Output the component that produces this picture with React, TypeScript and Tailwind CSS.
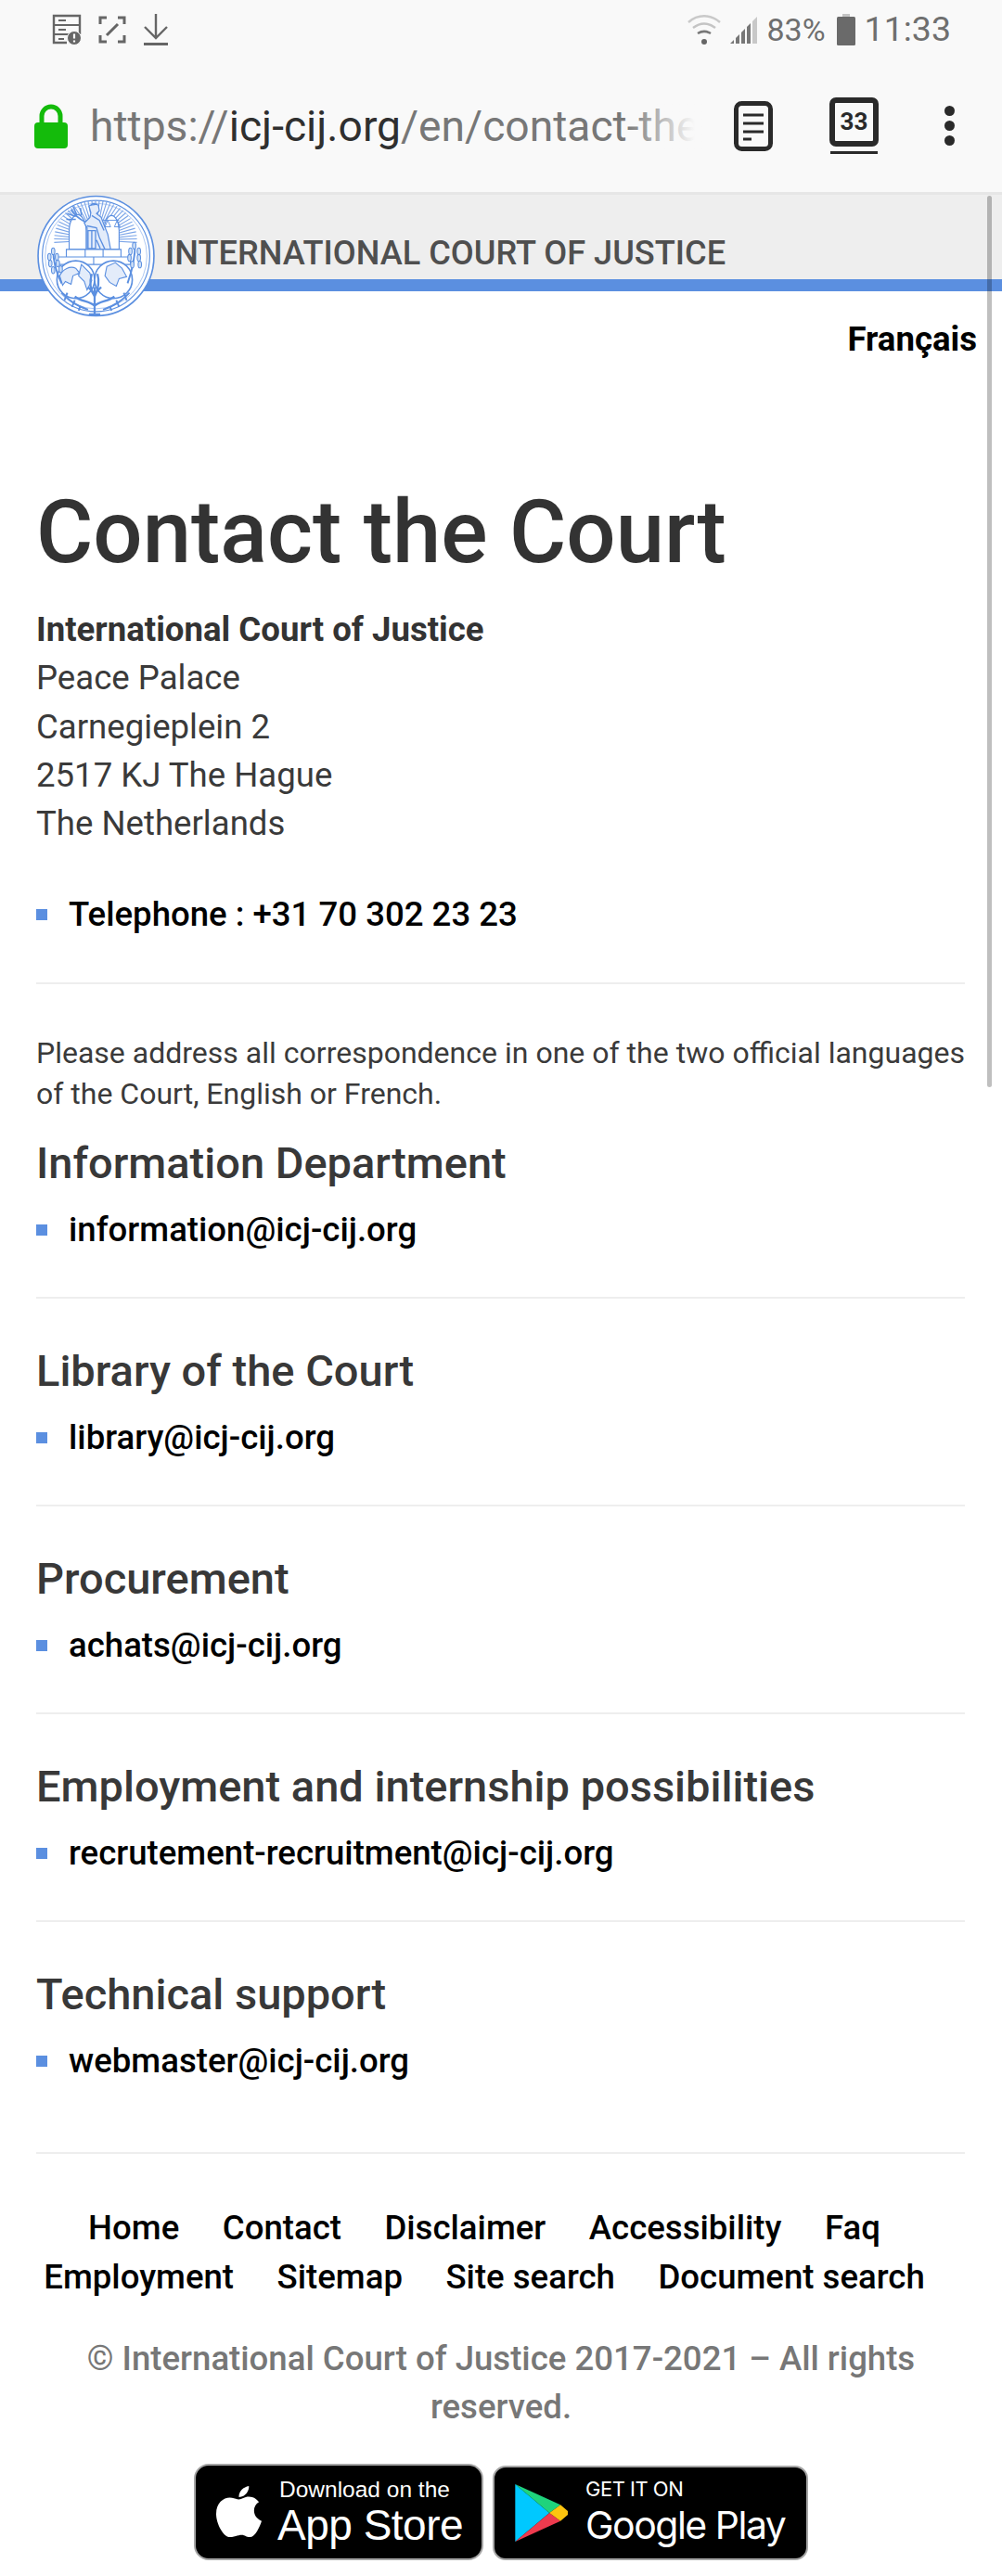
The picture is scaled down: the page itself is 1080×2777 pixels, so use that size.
import React from "react";

function Seal() {
  const rays = Array.from({ length: 37 }, (_, i) => {
    const a = Math.PI * 0.98 + (i * Math.PI * 1.04) / 36;
    return <line key={i} x1={62 + 20 * Math.cos(a)} y1={48 + 20 * Math.sin(a)} x2={62 + 44 * Math.cos(a)} y2={48 + 42 * Math.sin(a)} stroke="#7ba5e8" strokeWidth="1.1" />;
  });
  const leavesL = [[17, 60], [13, 66], [21, 66], [14, 73], [22, 73], [17, 80], [25, 79]];
  const leavesR = [[103, 54], [99, 60], [108, 60], [98, 67], [108, 67], [101, 74], [109, 74]];
  return (
    <svg viewBox="0 0 126 130" className="absolute left-[38px] top-0 w-[132px] h-[132px]">
      <ellipse cx="62.500" cy="65" rx="61.500" ry="63.500" fill="#fff" stroke="#5b8fe0" strokeWidth="1.6" />
      <ellipse cx="62.500" cy="65" rx="57" ry="59" fill="none" stroke="#5b8fe0" strokeWidth="1.1" />
      <ellipse cx="62.500" cy="65" rx="54" ry="56" fill="none" stroke="#9dbcef" strokeWidth="0.8" />
      {rays}
      {/* domes */}
      <path d="M34 58V38c0-10 5-17 9-17s9 7 9 17v20z" fill="#fff" stroke="#5b8fe0" strokeWidth="1.1" />
      <path d="M71 58V38c0-9 4-16 8-16s8 7 8 16v20z" fill="#fff" stroke="#5b8fe0" strokeWidth="1.1" />
      {/* Justice figure */}
      <path d="M55 12l5-3 5 2 1 6-3 3 5 4 3 8 4 10 3 16H53V35l-3-5 6-6 1-5z" fill="#e3ecfa" stroke="#5b8fe0" strokeWidth="1.2" />
      <path d="M57 11l7-1M58 22l8 5 5 11M53 33l10 2 3 10 6 13M54 38h8v19h-8zM58 38v19M63 48l4 9" fill="none" stroke="#5b8fe0" strokeWidth="1.3" />
      <path d="M36 16c3 5 8 9 15 13M38 12l4 9M32 20l9 3M31 26l10 0M46 14l1 8" fill="none" stroke="#5b8fe0" strokeWidth="1.5" />
      <path d="M70 27h17M75 27l-3 7h6zM85 27l-3 7h6z" fill="none" stroke="#5b8fe0" strokeWidth="0.9" />
      {/* plinth */}
      <path d="M31 58h58v8H31zM22 66h77v8H22zM51 58v8M70 58v8M60 66v8" fill="#fff" stroke="#5b8fe0" strokeWidth="1.1" />
      {/* globes */}
      <circle cx="41" cy="90" r="20" fill="#fff" stroke="#5b8fe0" strokeWidth="1.6" />
      <circle cx="81" cy="90" r="20" fill="#fff" stroke="#5b8fe0" strokeWidth="1.6" />
      <path d="M24 86c3-7 11-11 17-8l4 5-7 3-2 9-6-3-3 4zM47 74l9 9 2 8-5 10-3-9-6-6zM74 76l9-4 7 6 5 9-8 2-3 8-7-4-5-7z" fill="#e3ecfa" stroke="#5b8fe0" strokeWidth="1.1" />
      {/* tree */}
      <path d="M61 127V98M61 118c-6-6-14-4-21-10M61 118c6-6 14-4 21-10M61 108c-4-6-6-14-3-24M61 108c3-6 6-14 3-24M55 127h12M54 98l7 7 7-7" fill="none" stroke="#5b8fe0" strokeWidth="2.2" />
      {/* laurels */}
      <path d="M17 58c0 10 3 24 9 36M104 52c0 12-3 28-8 42M26 104c8 8 14 13 28 18M98 104c-8 8-14 13-28 18M32 104l-3 8M40 112l-3 7M92 104l3 8M84 112l3 7M46 118l-2 5M77 118l2 5" fill="none" stroke="#5b8fe0" strokeWidth="1.9" />
      {leavesL.concat(leavesR).map(([x, y], i) => (
        <ellipse key={i} cx={x} cy={y} rx="1.800" ry="3.600" fill="#cfe0f6" stroke="#5b8fe0" strokeWidth="1" />
      ))}
    </svg>
  );
}

function Mail({ text, last }: { text: string; last?: boolean }) {
  return (
    <div className={`flex items-center h-[52px] ${last ? "mb-[72px]" : "mb-[46px]"}`}>
      <span className="w-[12px] h-[12px] bg-[#5b8fe0] mr-[23px]" />
      <span className="text-[36.6px] font-medium text-black">{text}</span>
    </div>
  );
}

function Section({ title, mail, last }: { title: string; mail: string; last?: boolean }) {
  return (
    <div className={last ? "" : "border-b-[2px] border-[#eeeeee]"}>
      <h2 className="text-[47px] leading-[58px] font-medium text-[#383838] mb-[17px]">{title}</h2>
      <Mail text={mail} last={last} />
    </div>
  );
}

export default function App() {
  return (
    <div className="relative w-[1080px] h-[2777px] bg-white overflow-hidden font-['Roboto',sans-serif]">
      {/* Browser chrome */}
      <div className="h-[210px] bg-[#f9f9f9] border-b-[3px] border-[#e6e6e6] flex flex-col">
        <div className="h-[62px] flex items-center justify-between pl-[56px] pr-[55px] pt-[2px]">
          <div className="flex items-center gap-[18px] text-[#666]">
            <svg width="32" height="34" viewBox="0 0 32 34" fill="none" stroke="#666" strokeWidth="2.4">
              <path d="M16 31H2V2h28v20" />
              <path d="M2 12h28M2 22h16M7 7h8M7 17h8M7 27h6" strokeWidth="2" />
              <circle cx="24" cy="26" r="7.5" fill="#666" stroke="#f9f9f9" strokeWidth="1" />
              <path d="M24 21.5v5M24 28.5v2" stroke="#fff" strokeWidth="2.2" />
            </svg>
            <svg width="30" height="30" viewBox="0 0 30 30" fill="none" stroke="#666" strokeWidth="3">
              <path d="M2 9V2h7M21 2h7v7M28 21v7h-7M9 28H2v-7M9 21L21 9" />
            </svg>
            <svg width="28" height="36" viewBox="0 0 28 36" fill="none" stroke="#666" strokeWidth="2.4">
              <path d="M14 1v25M2 15l12 12 12-12" />
              <path d="M1 33.5h26" strokeWidth="3" />
            </svg>
          </div>
          <div className="flex items-center text-[#6f6f6f]">
            <svg width="38" height="34" viewBox="0 0 38 34" fill="none" className="mr-[8px]">
              <path d="M2 9c10-9 24-9 34 0" stroke="#c9c9c9" strokeWidth="2.4" />
              <path d="M7 15c8-6 16-6 24 0" stroke="#c4c4c4" strokeWidth="2.4" />
              <path d="M12 21c5-3 9-3 14 0" stroke="#777" strokeWidth="2.6" />
              <circle cx="19" cy="30" r="3" fill="#666" />
            </svg>
            <svg width="32" height="34" viewBox="0 0 32 34" className="mr-[8px]">
              <path d="M1 32l4-4v4z" fill="#777" />
              <path d="M7 26l4-4v10H7zM13 20l4-4v16h-4z" fill="#777" />
              <path d="M19 14l4-4v22h-4z" fill="#777" />
              <path d="M25 8l5-5v29h-5z" fill="#c8c8c8" />
            </svg>
            <span className="text-[34px] leading-none mr-[11px]">83%</span>
            <svg width="22" height="34" viewBox="0 0 22 34" className="mr-[9px]">
              <path d="M7 0h8v3H7z" fill="#c4c4c4" />
              <rect x="1" y="3" width="20" height="31" rx="1.5" fill="#6a6a6a" />
            </svg>
            <span className="text-[37.5px] leading-none">11:33</span>
          </div>
        </div>
        <div className="flex-1 flex items-center pl-[37px] pt-[2px]">
          <svg width="36" height="48" viewBox="0 0 36 48" className="shrink-0">
            <path d="M8 22V13a10 10 0 0 1 20 0v9" fill="none" stroke="#14bb0b" strokeWidth="5" />
            <rect x="0" y="20" width="36" height="28" rx="4" fill="#14bb0b" />
          </svg>
          <div className="relative w-[655px] whitespace-nowrap ml-[24px] text-[46.2px] leading-[60px] text-[#777777]">
            https://<span className="text-[#2f2f2f]">icj-cij.org</span>/en/contact-the-
            <div className="absolute right-[-18px] top-0 w-[96px] h-full bg-gradient-to-r from-transparent to-[#f9f9f9] to-[78%]" />
          </div>
          <svg width="42" height="54" viewBox="0 0 42 54" fill="none" className="ml-[39px] shrink-0">
            <rect x="2.500" y="2.500" width="37" height="49" rx="6" stroke="#2a2a2a" strokeWidth="5" />
            <path d="M10 15h22M10 24h22M10 33h22M10 41h9" stroke="#2a2a2a" strokeWidth="2.8" />
          </svg>
          <div className="ml-[61px] w-[53px] shrink-0 flex flex-col items-stretch">
            <div className="h-[53px] w-[53px] rounded-[7px] border-[6px] border-[#2a2a2a] flex items-center justify-center text-[26px] font-bold text-[#2a2a2a] leading-none pb-[2px]">33</div>
            <div className="h-[3px] mt-[5px] mx-[1px] bg-[#2a2a2a]" />
          </div>
          <div className="ml-[71px] shrink-0 flex flex-col gap-[5px] w-[11px]">
            <span className="w-[11px] h-[11px] rounded-full bg-[#2a2a2a]" />
            <span className="w-[11px] h-[11px] rounded-full bg-[#2a2a2a]" />
            <span className="w-[11px] h-[11px] rounded-full bg-[#2a2a2a]" />
          </div>
        </div>
      </div>

      {/* Page header */}
      <div className="relative h-[104px]">
        <div className="h-[91px] bg-[#eeeeee] pl-[178px] pt-[41px] text-[36.2px] leading-[44px] font-medium text-[#4f4f4f]">INTERNATIONAL COURT OF JUSTICE</div>
        <div className="h-[13px] bg-[#5b8fe0]" />
        <Seal />
      </div>

      <div className="pl-[39px] pr-[40px]">
        <div className="flex justify-end mt-[30px] -mr-[13px]">
          <span className="text-[36.6px] leading-[44px] font-bold text-black">Français</span>
        </div>
        <h1 className="mt-[131px] text-[94px] leading-[110px] font-medium text-[#333333]">Contact the Court</h1>
        <div className="mt-[24px] text-[36.6px] leading-[52.3px] text-[#3a3a3a]">
          <div className="font-bold text-[#333333]">International Court of Justice</div>
          <div>Peace Palace</div>
          <div>Carnegieplein 2</div>
          <div>2517 KJ The Hague</div>
          <div>The Netherlands</div>
        </div>
        <div className="flex items-center h-[52px] mt-[46px]">
          <span className="w-[12px] h-[12px] bg-[#5b8fe0] mr-[23px]" />
          <span className="text-[36.6px] font-medium text-black">Telephone : +31 70 302 23 23</span>
        </div>
        <div className="h-[2px] bg-[#eeeeee] mt-[47px]" />
        <p className="mt-[52px] text-[32px] leading-[44px] text-[#3a3a3a] text-justify">
          Please address all correspondence in one of the two official languages of the Court, English or French.
        </p>
        <div className="mt-[24px]">
          <Section title="Information Department" mail="information@icj-cij.org" />
          <div className="h-[49px]" />
          <Section title="Library of the Court" mail="library@icj-cij.org" />
          <div className="h-[49px]" />
          <Section title="Procurement" mail="achats@icj-cij.org" />
          <div className="h-[49px]" />
          <Section title="Employment and internship possibilities" mail="recrutement-recruitment@icj-cij.org" />
          <div className="h-[49px]" />
          <Section title="Technical support" mail="webmaster@icj-cij.org" last />
        </div>
        <div className="h-[2px] bg-[#eeeeee]" />
      </div>

      {/* Footer */}
      <div className="mt-[53px] flex flex-col items-center">
        <div className="flex gap-[46.500px] pr-[36px] text-[36.6px] leading-[53px] font-medium text-black">
          <span>Home</span><span>Contact</span><span>Disclaimer</span><span>Accessibility</span><span>Faq</span>
        </div>
        <div className="flex gap-[46.500px] pr-[36px] text-[36.6px] leading-[53px] font-medium text-black">
          <span>Employment</span><span>Sitemap</span><span>Site search</span><span>Document search</span>
        </div>
        <p className="mt-[36px] w-[960px] text-center text-[36.6px] leading-[52px] font-medium text-[#777777]">
          © International Court of Justice 2017-2021 – All rights reserved.
        </p>
        <div className="mt-[35px] flex items-start gap-[10px]">
          <div className="w-[312px] h-[104px] rounded-[16px] bg-black border-[2px] border-[#a6a6a6] flex items-center text-white pl-[22px]">
            <svg width="49" height="58" viewBox="0 0 50 60" preserveAspectRatio="none" fill="#fff" className="shrink-0">
              <path d="M36 1c.5 5-3.500 12-11 12.500C24.500 7 30 2 36 1z" />
              <path d="M25 16c3 0 6-3 11-3 5 0 9 3 11 6-8 5-7 17 3 21-2 6-7 18-13 18-4 0-5-2.500-9-2.500S20 58 15 58C8 58 0 43 0 32c0-12 8-18 15-18 4 0 7 2 10 2z" />
            </svg>
            <div className="ml-[17px] flex flex-col font-['Liberation_Sans',sans-serif]">
              <span className="text-[24.500px] leading-[28px] pl-[2px] whitespace-nowrap">Download on the</span>
              <span className="text-[46px] leading-[48px] whitespace-nowrap tracking-[-0.5px]">App Store</span>
            </div>
          </div>
          <div className="w-[340px] h-[102px] mt-[2px] rounded-[14px] bg-black border-[2px] border-[#a6a6a6] flex items-center text-white pl-[21px]">
            <svg width="58" height="66" viewBox="0 0 44 68" preserveAspectRatio="none" className="shrink-0">
              <path d="M1 2v64l28-32z" fill="#00c8ff" />
              <path d="M1 2l28 32 9-9z" fill="#1fd37c" />
              <path d="M1 66l28-32 9 9z" fill="#ee3a4e" />
              <path d="M38 25l6 7c1 1 1 3 0 4l-6 7-9-9z" fill="#fcc40f" />
            </svg>
            <div className="ml-[19px] flex flex-col font-['Inter',sans-serif]">
              <span className="text-[22px] leading-[26px] whitespace-nowrap tracking-[-0.5px]">GET IT ON</span>
              <span className="text-[41px] leading-[52px] whitespace-nowrap tracking-[-1.5px]">Google Play</span>
            </div>
          </div>
        </div>
      </div>

      {/* Scrollbar overlay */}
      <div className="absolute left-[1064px] top-[211px] w-[5px] h-[961px] rounded-full bg-black/25" />
    </div>
  );
}
